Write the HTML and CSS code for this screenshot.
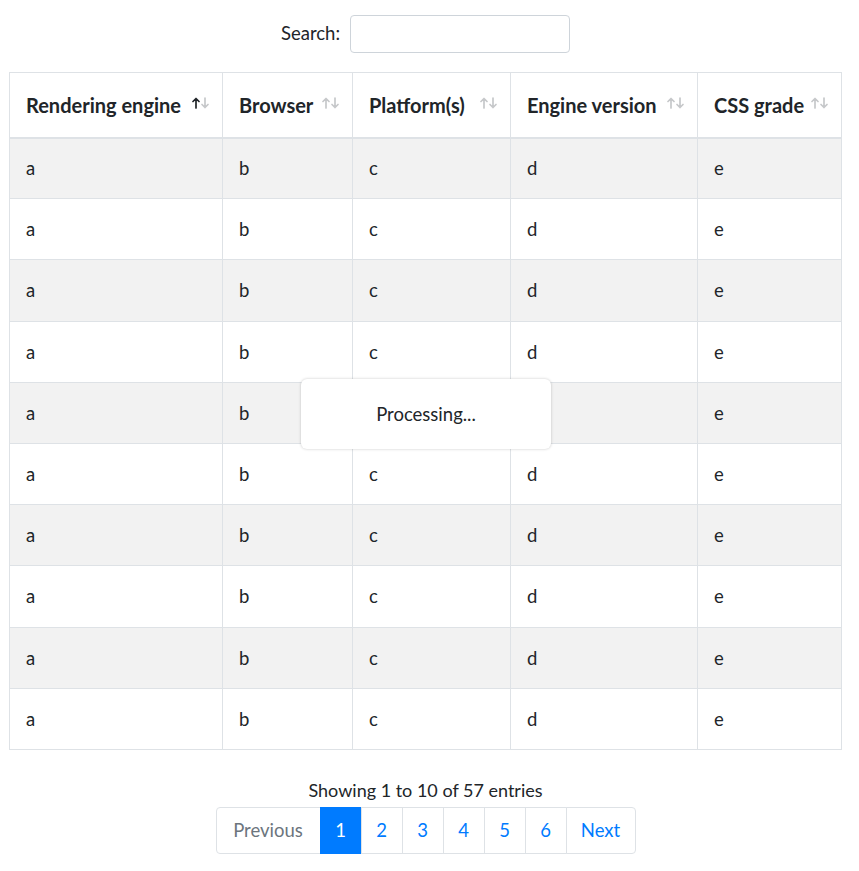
FILE: index.html
```html
<!DOCTYPE html>
<html>
<head>
<meta charset="utf-8">
<link rel="stylesheet" href="styles.css">
</head>
<body>
<div class="page">
  <div class="search-row">
    <label class="search-label" for="q">Search:</label>
    <input id="q" class="search-input" type="search">
  </div>
  <div class="table-wrap">
    <table class="grid">
      <colgroup>
        <col class="c1"><col class="c2"><col class="c3"><col class="c4"><col class="c5">
      </colgroup>
      <thead>
        <tr>
          <th><div class="th-in"><span>Rendering engine</span><svg class="sort" viewBox="0 0 18 12" width="18" height="12"><g fill="none" stroke-width="1.7" stroke-linecap="round" stroke-linejoin="round"><path class="up on" d="M4 11V1.5M1 4.5L4 1.5L7 4.5"/><path class="down" d="M13 1V10.5M10 7.5L13 10.5L16 7.5"/></g></svg></div></th>
          <th><div class="th-in"><span>Browser</span><svg class="sort" viewBox="0 0 18 12" width="18" height="12"><g fill="none" stroke-width="1.7" stroke-linecap="round" stroke-linejoin="round"><path class="up" d="M4 11V1.5M1 4.5L4 1.5L7 4.5"/><path class="down" d="M13 1V10.5M10 7.5L13 10.5L16 7.5"/></g></svg></div></th>
          <th><div class="th-in"><span>Platform(s)</span><svg class="sort" viewBox="0 0 18 12" width="18" height="12"><g fill="none" stroke-width="1.7" stroke-linecap="round" stroke-linejoin="round"><path class="up" d="M4 11V1.5M1 4.5L4 1.5L7 4.5"/><path class="down" d="M13 1V10.5M10 7.5L13 10.5L16 7.5"/></g></svg></div></th>
          <th><div class="th-in"><span>Engine version</span><svg class="sort" viewBox="0 0 18 12" width="18" height="12"><g fill="none" stroke-width="1.7" stroke-linecap="round" stroke-linejoin="round"><path class="up" d="M4 11V1.5M1 4.5L4 1.5L7 4.5"/><path class="down" d="M13 1V10.5M10 7.5L13 10.5L16 7.5"/></g></svg></div></th>
          <th><div class="th-in"><span>CSS grade</span><svg class="sort" viewBox="0 0 18 12" width="18" height="12"><g fill="none" stroke-width="1.7" stroke-linecap="round" stroke-linejoin="round"><path class="up" d="M4 11V1.5M1 4.5L4 1.5L7 4.5"/><path class="down" d="M13 1V10.5M10 7.5L13 10.5L16 7.5"/></g></svg></div></th>
        </tr>
      </thead>
      <tbody>
        <tr class="odd"><td>a</td><td>b</td><td>c</td><td>d</td><td>e</td></tr>
        <tr><td>a</td><td>b</td><td>c</td><td>d</td><td>e</td></tr>
        <tr class="odd"><td>a</td><td>b</td><td>c</td><td>d</td><td>e</td></tr>
        <tr><td>a</td><td>b</td><td>c</td><td>d</td><td>e</td></tr>
        <tr class="odd"><td>a</td><td>b</td><td>c</td><td>d</td><td>e</td></tr>
        <tr><td>a</td><td>b</td><td>c</td><td>d</td><td>e</td></tr>
        <tr class="odd"><td>a</td><td>b</td><td>c</td><td>d</td><td>e</td></tr>
        <tr><td>a</td><td>b</td><td>c</td><td>d</td><td>e</td></tr>
        <tr class="odd"><td>a</td><td>b</td><td>c</td><td>d</td><td>e</td></tr>
        <tr><td>a</td><td>b</td><td>c</td><td>d</td><td>e</td></tr>
      </tbody>
    </table>
    <div class="processing">Processing...</div>
  </div>
  <div class="info">Showing 1 to 10 of 57 entries</div>
  <nav class="pager">
    <span class="pg prev disabled">Previous</span>
    <span class="pg num active">1</span>
    <span class="pg num">2</span>
    <span class="pg num">3</span>
    <span class="pg num">4</span>
    <span class="pg num">5</span>
    <span class="pg num">6</span>
    <span class="pg next">Next</span>
  </nav>
</div>
</body>
</html>
```
FILE: styles.css
```css
* { box-sizing: border-box; }
html, body { margin: 0; padding: 0; background: #fff; }
body {
  font-family: Lato, "Noto Sans", "Liberation Sans", sans-serif;
  font-size: 18px;
  color: #212529;
}
.page {
  width: 859px;
  padding: 15px 0 0 9px;
}
.search-row {
  width: 833px;
  display: flex;
  justify-content: center;
  align-items: center;
  gap: 10px;
  height: 38px;
  margin-bottom: 19px;
}
.search-label { font-size: 18.5px; line-height: 24px; margin-top: -2px; }
.search-input {
  width: 220px;
  height: 38px;
  border: 1px solid #ced4da;
  border-radius: 4px;
  background: #fff;
  outline: none;
  margin: 0;
}
.table-wrap {
  position: relative;
  width: 832px;
}
.grid {
  width: 832px;
  table-layout: fixed;
  border-collapse: collapse;
}
.c1 { width: 213px; }
.c2 { width: 130px; }
.c3 { width: 158px; }
.c4 { width: 187px; }
.c5 { width: 144px; }
.grid th, .grid td {
  border: 1px solid #dee2e6;
  text-align: left;
  vertical-align: middle;
}
.grid th {
  height: 65px;
  padding: 0 12px 0 16px;
  font-weight: 700;
  font-size: 20px;
  border-bottom: 2px solid #dee2e6;
}
.th-in {
  display: flex;
  align-items: center;
  justify-content: space-between;
  white-space: nowrap;
}
.sort { flex: none; margin-top: -4px; }
.sort path { stroke: #c6c8ca; }
.sort path.on { stroke: #212529; }
.grid td {
  height: 61.2px;
  padding: 0 16px;
  line-height: 24px;
  font-size: 18.5px;
}
.grid tr.odd td { background: #f2f2f2; }
.processing {
  position: absolute;
  top: 307px;
  left: 292px;
  width: 250px;
  height: 70px;
  display: flex;
  align-items: center;
  justify-content: center;
  background: #fff;
  border-radius: 6px;
  box-shadow: 0 0 3px rgba(0,0,0,0.22);
  font-size: 18.5px;
  color: #212529;
}
.info {
  width: 833px;
  text-align: center;
  margin-top: 27px;
  line-height: 27px;
  height: 27px;
}
.pager {
  width: 833px;
  margin-top: 3px;
  display: flex;
  justify-content: center;
}
.pg {
  display: flex;
  align-items: center;
  justify-content: center;
  height: 47px;
  border: 1px solid #dee2e6;
  margin-left: -1px;
  color: #007bff;
  background: #fff;
  font-size: 18.5px;
}
.pg.num { width: 42px; }
.pg.prev { width: 105px; margin-left: 0; border-radius: 4px 0 0 4px; }
.pg.next { width: 70px; border-radius: 0 4px 4px 0; }
.pg.disabled { color: #6c757d; }
.pg.active { background: #007bff; border-color: #007bff; color: #fff; }
```
